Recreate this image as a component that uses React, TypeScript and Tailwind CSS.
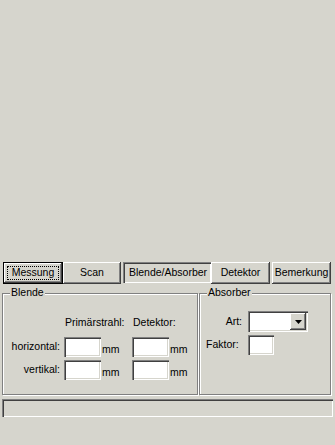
import React from 'react';

const raised =
  'bg-[#d6d5cd] shadow-[inset_-1px_-1px_#404040,inset_1px_1px_#ffffff,inset_-2px_-2px_#808080]';
const sunken =
  'bg-white shadow-[inset_1px_1px_#808080,inset_2px_2px_#404040,inset_-1px_-1px_#ffffff,inset_-2px_-2px_#d6d5cd]';

const Field: React.FC<{ w: string }> = ({ w }) => <div className={`${w} h-[20px] ${sunken}`} />;

const Group: React.FC<{ title: string; className: string; children?: React.ReactNode }> = ({
  title,
  className,
  children,
}) => (
  <div
    className={`relative border border-[#808080] shadow-[inset_1px_1px_#ffffff,1px_1px_#ffffff] ${className}`}
  >
    <span className="absolute left-[7px] top-[-8px] bg-[#d6d5cd] px-[1px] leading-[13px]">{title}</span>
    {children}
  </div>
);

const MmRow: React.FC<{ label: string }> = ({ label }) => (
  <div className="flex items-center">
    <span className="w-[57px] text-right">{label}</span>
    <div className="ml-[4px] flex items-end">
      <Field w="w-[37px]" />
      <span className="ml-[1px] w-[30px] leading-[13px] mb-[1px]">mm</span>
      <Field w="w-[37px]" />
      <span className="ml-[1px] leading-[13px] mb-[1px]">mm</span>
    </div>
  </div>
);

export default function App() {
  return (
    <div className="w-[335px] h-[445px] bg-[#d6d5cd] pt-[262px] text-[10.5px] text-black font-['Liberation_Sans',Arial,sans-serif] overflow-hidden">
      <div className="flex pl-[3px] h-[22px]">
        <div className="w-[60px] h-[22px] border border-black">
          <div className={`h-full ${raised} p-[3px]`}>
            <div className="h-full border border-dotted border-black flex items-center justify-center">
              Messung
            </div>
          </div>
        </div>
        <div className={`w-[58px] h-[22px] ${raised} flex items-center justify-center`}>Scan</div>
        <div className="ml-[2px] w-[88px] h-[21px] bg-[#d6d5cd] shadow-[inset_1px_1px_#808080,inset_2px_2px_#404040,inset_-1px_-1px_#ffffff] flex items-center justify-center pl-[2px] pt-[1px]">
          Blende/Absorber
        </div>
        <div className={`w-[59px] h-[22px] ${raised} flex items-center justify-center`}>Detektor</div>
        <div className={`ml-[2px] w-[59px] h-[22px] ${raised} flex items-center justify-center`}>
          Bemerkung
        </div>
      </div>

      <div className="flex mt-[9px] pl-[2px]">
        <Group title="Blende" className="w-[196px] h-[102px]">
          <div className="flex pl-[62px] pt-[22px] leading-[13px]">
            <span className="w-[68px]">Primärstrahl:</span>
            <span>Detektor:</span>
          </div>
          <div className="mt-[8px] flex flex-col gap-[3px]">
            <MmRow label="horizontal:" />
            <MmRow label="vertikal:" />
          </div>
        </Group>
        <Group title="Absorber" className="ml-[1px] w-[132px] h-[102px]">
          <div className="mt-[17px] flex items-center">
            <span className="w-[42px] text-right">Art:</span>
            <div className={`ml-[6px] w-[60px] h-[21px] ${sunken} p-[2px] flex justify-end`}>
              <div className={`w-[16px] h-full ${raised} flex items-center justify-center`}>
                <svg width="7" height="4" viewBox="0 0 7 4">
                  <path d="M0 0h7L3.5 4z" fill="#000" />
                </svg>
              </div>
            </div>
          </div>
          <div className="mt-[3px] flex items-center">
            <span className="w-[40px] pl-[6px]">Faktor:</span>
            <div className="ml-[8px]">
              <Field w="w-[26px]" />
            </div>
          </div>
        </Group>
      </div>

      <div className="mt-[4px] ml-[2px] w-[331px] h-[18px] bg-[#d6d5cd] shadow-[inset_1px_1px_#808080,inset_2px_2px_#404040,inset_-1px_-1px_#ffffff]" />
    </div>
  );
}
